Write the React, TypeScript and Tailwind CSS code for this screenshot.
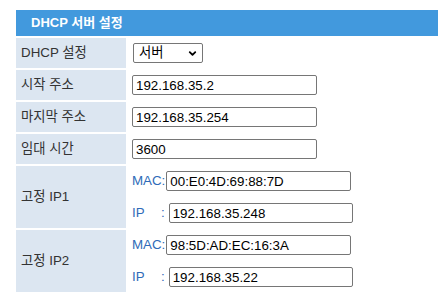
import { ChevronDown } from 'lucide-react'

const FONT = "font-['Liberation_Sans','Noto_Sans_CJK_KR',sans-serif]"

const inputCls =
  'h-[20px] border border-[#767676] rounded-[2px] bg-white px-[3px] text-[13.33px] text-black outline-none'

function Row({ label, children, tall }: { label: string; children: React.ReactNode; tall?: boolean }) {
  return (
    <div className={`flex ${tall ? 'h-[62px]' : 'h-[30px]'}`}>
      <div className="w-[110px] shrink-0 bg-[#dce6f1] flex items-center pl-[5px] text-[13.33px] text-[#333333]">
        {label}
      </div>
      <div className="flex-1 bg-white flex items-center pl-[6px]">{children}</div>
    </div>
  )
}

function StaticIp({ mac, ip }: { mac: string; ip: string }) {
  return (
    <div className="flex flex-col gap-[12px]">
      <div className="flex items-center text-[13.33px] text-[#2f6bb8]">
        <span>MAC:</span>
        <input className={`${inputCls} w-[185px] ml-[1px]`} defaultValue={mac} />
      </div>
      <div className="flex items-center text-[13.33px] text-[#2f6bb8]">
        <span className="inline-block w-[29px]">IP</span>
        <span>:</span>
        <input className={`${inputCls} w-[184px] ml-[4px]`} defaultValue={ip} />
      </div>
    </div>
  )
}

export default function App() {
  return (
    <div className={`${FONT} bg-white w-[443px] h-[298px] pt-[10px] pl-[16px]`}>
      <div className="w-[422px] flex flex-col gap-[2px]">
        <div className="h-[26px] bg-[#4299dd] flex items-center pl-[15px] text-[13px] font-bold text-white">
          DHCP 서버 설정
        </div>
        <Row label="DHCP 설정">
          <div className="relative ml-[1px] w-[70px] h-[20px] border border-[#767676] rounded-[2px] flex items-center pl-[5px] text-[13.33px] text-black">
            서버
            <ChevronDown className="absolute right-[4px] top-[4px] w-[11px] h-[11px]" strokeWidth={4} />
          </div>
        </Row>
        <Row label="시작 주소">
          <input className={`${inputCls} w-[185px]`} defaultValue="192.168.35.2" />
        </Row>
        <Row label="마지막 주소">
          <input className={`${inputCls} w-[185px]`} defaultValue="192.168.35.254" />
        </Row>
        <Row label="임대 시간">
          <input className={`${inputCls} w-[185px]`} defaultValue="3600" />
        </Row>
        <Row label="고정 IP1" tall>
          <StaticIp mac="00:E0:4D:69:88:7D" ip="192.168.35.248" />
        </Row>
        <Row label="고정 IP2" tall>
          <StaticIp mac="98:5D:AD:EC:16:3A" ip="192.168.35.22" />
        </Row>
      </div>
    </div>
  )
}
